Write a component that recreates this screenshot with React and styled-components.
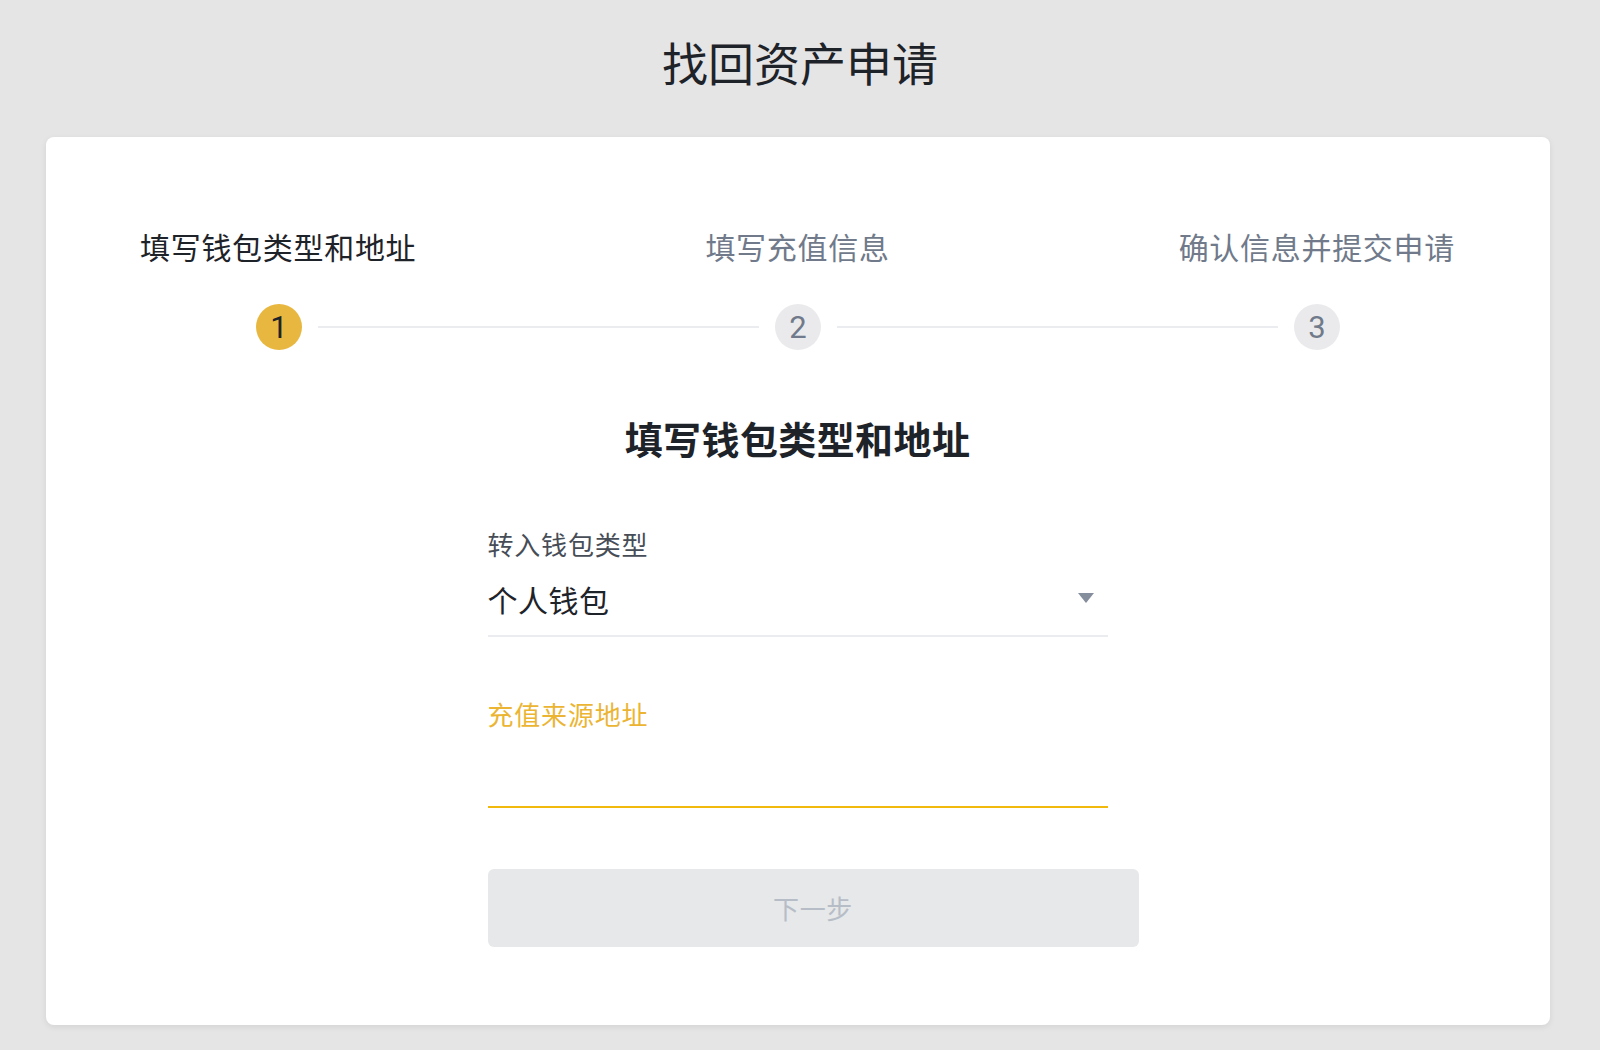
import React from "react";
import styled, { createGlobalStyle } from "styled-components";

const GlobalStyle = createGlobalStyle`
  html, body {
    margin: 0;
    padding: 0;
    background: #e5e5e5;
  }
  body {
    font-family: "Noto Sans CJK SC", "Noto Sans", sans-serif;
    color: #1e2329;
  }
  * { box-sizing: border-box; }
`;

const Page = styled.div`
  min-height: 1050px;
  padding: 31px 50px 25px 46px;
  display: flex;
  flex-direction: column;
  gap: 46px;
`;

const PageTitle = styled.h1`
  margin: 0;
  text-align: center;
  font-size: 46px;
  line-height: 60px;
  font-weight: 400;
  color: #1e2329;
  padding-left: 4px;
`;

const Card = styled.section`
  background: #ffffff;
  border-radius: 8px;
  box-shadow: 0 2px 6px rgba(0, 0, 0, 0.08);
  padding: 89px 95px 78px 94px;
  display: flex;
  flex-direction: column;
`;

const Stepper = styled.div`
  display: flex;
  flex-direction: column;
  gap: 38px;
`;

const StepLabels = styled.div`
  display: flex;
  justify-content: space-between;
`;

const StepLabel = styled.span`
  font-size: 30px;
  line-height: 40px;
  letter-spacing: 0.7px;
  color: ${(p) => (p.$active ? "#1e2329" : "#707a8a")};
  white-space: nowrap;
`;

const Track = styled.div`
  display: flex;
  align-items: center;
  padding: 0 115px 0 116px;
`;

const Dot = styled.div`
  width: 46px;
  height: 46px;
  border-radius: 50%;
  flex: none;
  display: flex;
  align-items: center;
  justify-content: center;
  background: ${(p) => (p.$active ? "#e8b73f" : "#eaeaec")};
  color: ${(p) => (p.$active ? "#1e2329" : "#707a8a")};
  font-family: "Roboto", "Noto Sans", sans-serif;
  font-size: 31px;
  line-height: 1;
`;

const Connector = styled.div`
  flex: 1;
  height: 2px;
  margin: 0 16px;
  background: #eaecef;
`;

const SectionTitle = styled.h2`
  margin: 63px 0 0;
  text-align: center;
  font-size: 38px;
  line-height: 50px;
  font-weight: 700;
  letter-spacing: 0.4px;
  color: #1e2329;
`;

const Form = styled.form`
  width: 620px;
  margin: 63px auto 0;
  display: flex;
  flex-direction: column;
`;

const FieldLabel = styled.label`
  display: block;
  font-size: 26px;
  line-height: 36px;
  letter-spacing: 0.8px;
  color: ${(p) => (p.$focused ? "#ebb533" : "#474d57")};
`;

const SelectBox = styled.div`
  margin-top: 15px;
  display: flex;
  align-items: center;
  justify-content: space-between;
  padding: 0 14px 14px 0;
  border-bottom: 2px solid #eaecef;
  margin-bottom: 59px;
`;

const SelectValue = styled.span`
  font-size: 30px;
  line-height: 44px;
  letter-spacing: 0.5px;
  color: #1e2329;
`;

const Caret = styled.svg`
  width: 16px;
  height: 10px;
  display: block;
  margin-top: -2px;
`;

const AddressInput = styled.input`
  display: block;
  width: 100%;
  height: 76px;
  border: none;
  border-bottom: 2px solid #f0b90b;
  outline: none;
  background: transparent;
  font-family: inherit;
  font-size: 28px;
  color: #1e2329;
  padding: 0;
`;

const NextButton = styled.button`
  margin-top: 61px;
  width: calc(100% + 31px);
  height: 78px;
  border: none;
  border-radius: 6px;
  background: #e6e8ea;
  color: #b7bdc6;
  font-family: inherit;
  font-size: 26px;
  letter-spacing: 0.7px;
  padding-bottom: 2px;
  cursor: not-allowed;
`;

const steps = ["填写钱包类型和地址", "填写充值信息", "确认信息并提交申请"];

export default function App() {
  return (
    <>
      <GlobalStyle />
      <Page>
        <PageTitle>找回资产申请</PageTitle>
        <Card>
          <Stepper>
            <StepLabels>
              {steps.map((s, i) => (
                <StepLabel key={s} $active={i === 0}>
                  {s}
                </StepLabel>
              ))}
            </StepLabels>
            <Track>
              <Dot $active>1</Dot>
              <Connector />
              <Dot>2</Dot>
              <Connector />
              <Dot>3</Dot>
            </Track>
          </Stepper>
          <SectionTitle>填写钱包类型和地址</SectionTitle>
          <Form onSubmit={(e) => e.preventDefault()}>
            <FieldLabel>转入钱包类型</FieldLabel>
            <SelectBox>
              <SelectValue>个人钱包</SelectValue>
              <Caret viewBox="0 0 16 10">
                <path d="M0 0 H16 L8 10 Z" fill="#848e9c" />
              </Caret>
            </SelectBox>
            <FieldLabel $focused>充值来源地址</FieldLabel>
            <AddressInput type="text" />
            <NextButton type="submit" disabled>
              下一步
            </NextButton>
          </Form>
        </Card>
      </Page>
    </>
  );
}
